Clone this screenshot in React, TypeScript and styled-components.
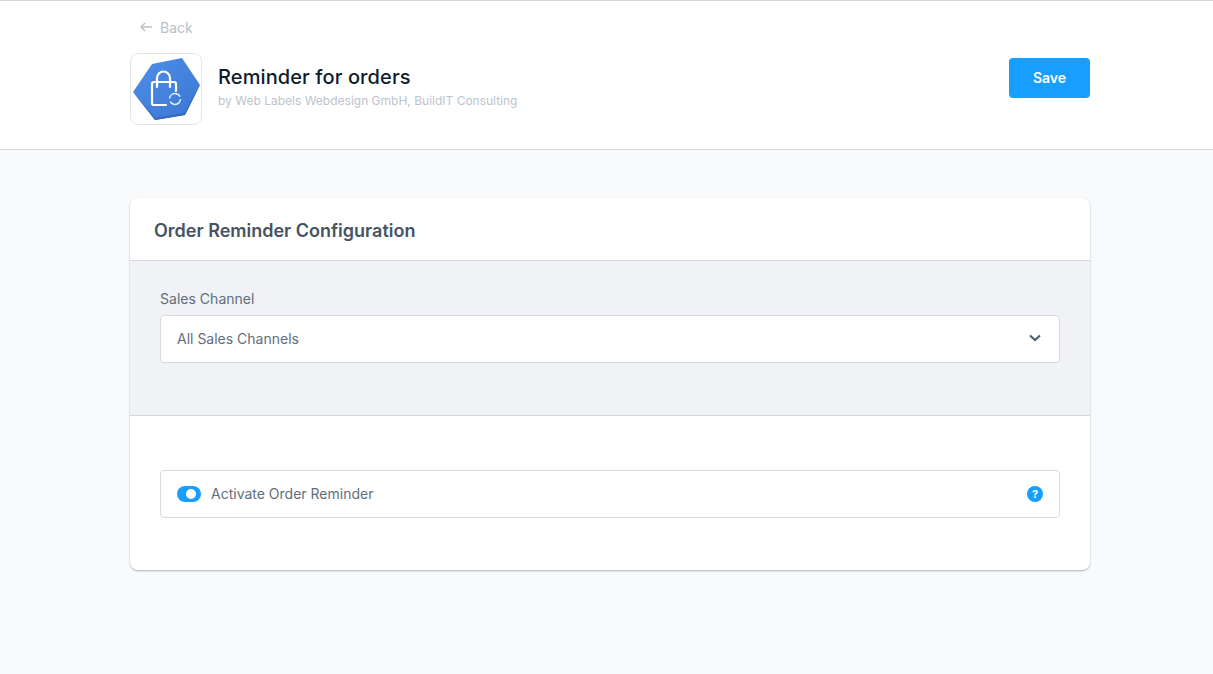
import React from "react";
import styled, { createGlobalStyle } from "styled-components";

const GlobalStyle = createGlobalStyle`
  html, body {
    margin: 0;
    padding: 0;
    height: 100%;
    overflow: hidden;
    background-color: #f9fafc;
    font-family: Inter, "Liberation Sans", sans-serif;
  }
  * {
    box-sizing: border-box;
  }
`;

const Page = styled.div`
  min-height: 674px;
  background-color: #f9fafc;
`;

const Header = styled.header`
  height: 150px;
  padding: 0 123px 0 130px;
  background-color: #fff;
  border-top: 1px solid #d3d9de;
  border-bottom: 1px solid #d3d9de;
`;

const BackLink = styled.a`
  display: flex;
  align-items: center;
  gap: 8px;
  height: 18px;
  margin: 17px 0 0 10px;
  font-size: 14px;
  color: #b8c1cb;
`;

const HeaderRow = styled.div`
  display: flex;
  align-items: flex-start;
  margin-top: 17px;
`;

const IconBox = styled.div`
  display: flex;
  align-items: center;
  justify-content: center;
  flex: none;
  width: 72px;
  height: 72px;
  border: 1px solid #e3e5e8;
  border-radius: 8px;
  background-color: #fff;
`;

const TitleBlock = styled.div`
  flex: 1;
  margin-left: 16px;
  margin-top: 11px;
`;

const Title = styled.h1`
  margin: 0;
  font-size: 20px;
  line-height: 26px;
  font-weight: 500;
  letter-spacing: 0.1px;
  color: #0f1c2b;
`;

const Author = styled.div`
  margin-top: 3px;
  font-size: 12px;
  line-height: 16px;
  color: #bcc4cd;
`;

const SaveButton = styled.button`
  width: 81px;
  height: 40px;
  margin-top: 5px;
  padding: 0 0 2px;
  border: none;
  border-radius: 4px;
  background-color: #189eff;
  color: #fff;
  font-family: inherit;
  font-size: 14px;
  font-weight: 600;
`;

const Content = styled.main`
  padding: 48px 123px 0 130px;
`;

const Card = styled.section`
  background-color: #fff;
  border-radius: 8px;
  box-shadow: 0 1px 2px rgba(120, 130, 140, 0.6);
  overflow: hidden;
`;

const CardTitle = styled.h2`
  margin: 0;
  height: 63px;
  padding: 0 24px;
  border-bottom: 1px solid #d3d9de;
  font-size: 18px;
  line-height: 65px;
  font-weight: 600;
  color: #455362;
`;

const GraySection = styled.div`
  height: 155px;
  padding: 29px 30px 0;
  background-color: #f0f2f5;
  border-bottom: 1px solid #d3d9de;
`;

const FieldLabel = styled.label`
  display: block;
  height: 25px;
  font-size: 14px;
  line-height: 18px;
  letter-spacing: 0.02px;
  color: #626e7c;
`;

const FieldBox = styled.div<{ $gap?: number }>`
  display: flex;
  align-items: center;
  gap: ${(p) => p.$gap ?? 0}px;
  height: 48px;
  padding: 0 16px 2px;
  background-color: #fff;
  border: 1px solid #d6dade;
  border-radius: 4px;
  font-size: 14px;
  color: #626e7c;
`;

const FieldText = styled.span`
  flex: 1;
`;

const ChevronIcon = styled.svg`
  margin-right: 2px;
`;

const WhiteSection = styled.div`
  height: 154px;
  padding: 54px 30px 0;
`;

const Toggle = styled.span`
  position: relative;
  flex: none;
  width: 24px;
  height: 16px;
  margin-top: 2px;
  border-radius: 8px;
  background-color: #189eff;

  &::after {
    content: "";
    position: absolute;
    top: 3px;
    right: 5px;
    width: 10px;
    height: 10px;
    border-radius: 50%;
    background-color: #fff;
  }
`;

const HelpBadge = styled.span`
  display: flex;
  align-items: center;
  justify-content: center;
  flex: none;
  width: 16px;
  height: 16px;
  margin-top: 2px;
  border-radius: 50%;
  background-color: #189eff;
  color: #fff;
  font-size: 11px;
  font-weight: 700;
`;

const App: React.FC = () => {
  return (
    <Page>
      <GlobalStyle />
      <Header>
        <BackLink>
          <svg width="12" height="10" viewBox="0 0 12 10" fill="none" stroke="#b8c1cb" strokeWidth="1.4">
            <path d="M12 5H1M5 1 1 5l4 4" />
          </svg>
          Back
        </BackLink>
        <HeaderRow>
          <IconBox>
            <svg width="68" height="64" viewBox="0 0 68 64">
              <defs>
                <linearGradient id="hex" x1="0" y1="0" x2="1" y2="1">
                  <stop offset="0" stopColor="#4f8fe8" />
                  <stop offset="1" stopColor="#3a76d2" />
                </linearGradient>
              </defs>
              <path d="M1 35 20 7 50 1 68 28 53 58 23 63Z" fill="url(#hex)" />
              <path d="M23 63 53 58 68 28 52.500 56 23 61 1 35Z" fill="#336abd" />
              <g fill="none" stroke="#fff" strokeWidth="2.200" strokeLinecap="round" strokeLinejoin="round">
                <path d="M34 48H22a2 2 0 0 1-2-2V27a2 2 0 0 1 2-2H42a2 2 0 0 1 2 2V34" />
                <path d="M25 30V21a6.500 6.500 0 0 1 13 0V30" />
              </g>
              <circle cx="43" cy="42" r="5.500" fill="none" stroke="#e4eefc" strokeWidth="1.500" strokeDasharray="14 3.300" />
            </svg>
          </IconBox>
          <TitleBlock>
            <Title>Reminder for orders</Title>
            <Author>by Web Labels Webdesign GmbH, BuildIT Consulting</Author>
          </TitleBlock>
          <SaveButton>Save</SaveButton>
        </HeaderRow>
      </Header>
      <Content>
        <Card>
          <CardTitle>Order Reminder Configuration</CardTitle>
          <GraySection>
            <FieldLabel>Sales Channel</FieldLabel>
            <FieldBox>
              <FieldText>All Sales Channels</FieldText>
              <ChevronIcon width="12" height="8" viewBox="0 0 12 8" fill="none" stroke="#52606e" strokeWidth="2.200">
                <path d="M1 1.500 6 6l5-4.500" />
              </ChevronIcon>
            </FieldBox>
          </GraySection>
          <WhiteSection>
            <FieldBox $gap={10}>
              <Toggle />
              <FieldText>Activate Order Reminder</FieldText>
              <HelpBadge>?</HelpBadge>
            </FieldBox>
          </WhiteSection>
        </Card>
      </Content>
    </Page>
  );
};

export default App;
